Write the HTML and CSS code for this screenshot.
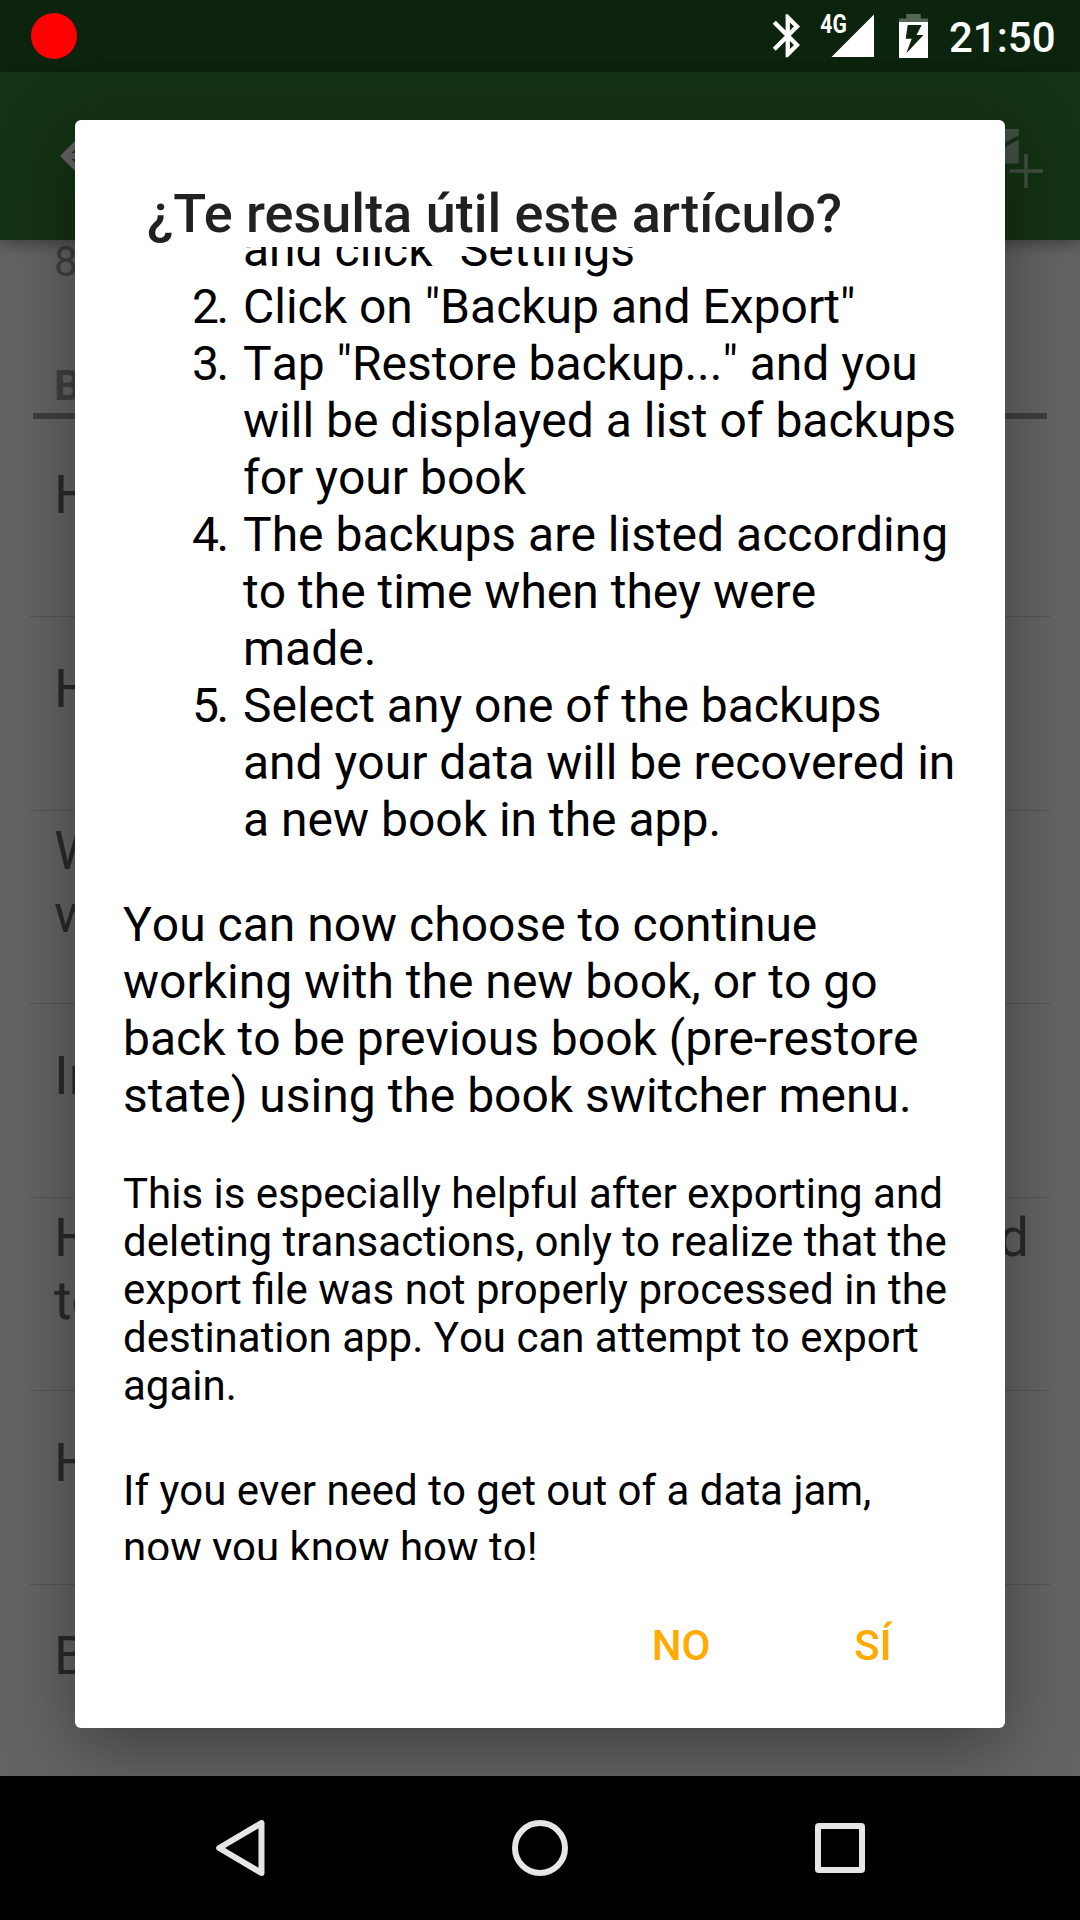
FILE: index.html
```html
<!DOCTYPE html>
<html lang="es">
<head>
<meta charset="utf-8">
<title>¿Te resulta útil este artículo?</title>
<link rel="stylesheet" href="styles.css">
</head>
<body>
<div class="screen">
  <header class="status-bar">
    <span class="record-dot"></span>
    <svg class="bluetooth" viewBox="0 0 24 24"><path d="M17.71 7.71L12 2h-1v7.59L6.41 5 5 6.41 10.59 12 5 17.59 6.41 19 11 14.41V22h1l5.71-5.71-4.3-4.29 4.3-4.29zM13 5.83l1.88 1.88L13 9.59V5.83zm1.88 10.46L13 18.17v-3.76l1.88 1.88z"/></svg>
    <svg class="signal" viewBox="0 0 55 72"><text class="network" transform="translate(.3 33.3) scale(.88 1.04)">4G</text><path d="M54 14.5V57H11.5z"/></svg>
    <svg class="battery" viewBox="0 0 29 72"><path class="battery-empty" d="M7.3 14h14.400v4.500H29V22H0v-3.500h7.300z"/><path fill-rule="evenodd" d="M0 22h29v36H0zM8.700 25L6.700 38.700h6L7.300 53.300 24.500 35h-7L22.700 25z"/></svg>
    <span class="clock">21:50</span>
  </header>
  <div class="toolbar">
    <svg class="back-arrow" viewBox="0 0 24 24"><path d="M20 11H7.830l5.590-5.590L12 4l-8 8 8 8 1.410-1.410L7.830 13H20v-2z"/></svg>
    <svg class="mail-add" viewBox="0 0 80 62"><path d="M0 2h54.700v6.500L27 23 0 8.500zM0 13l27 14.500L54.700 12.500v24H0z"/><path d="M60.200 27h3.600v15.200H79v3.600H63.800V61h-3.600V45.800H45.500v-3.600h14.700z"/></svg>
  </div>
  <main class="articles">
    <p class="count">8</p>
    <h2 class="section">B</h2>
    <ul class="rows">
      <li class="row"><span>H</span></li>
      <li class="row"><span>H</span></li>
      <li class="row"><span>W<br>w</span></li>
      <li class="row"><span>In</span></li>
      <li class="row"><span>H<br>to</span><span class="line-end">d</span></li>
      <li class="row"><span>H</span></li>
      <li class="row"><span>B</span></li>
    </ul>
  </main>
  <nav class="nav-bar">
    <svg viewBox="0 0 60 60"><path d="M9.200 30L51.500 5v50z"/></svg>
    <svg viewBox="0 0 60 60"><circle cx="30" cy="30" r="25"/></svg>
    <svg viewBox="0 0 60 60"><rect x="8" y="8" width="44" height="44" rx=".8"/></svg>
  </nav>
  <section class="dialog">
    <h1 class="title">¿Te resulta útil este artículo?</h1>
    <div class="content">
      <ol class="steps">
        <li class="step partial">and click "Settings"</li>
        <li class="step">Click on "Backup and Export"</li>
        <li class="step">Tap "Restore backup..." and you will be displayed a list of backups for your book</li>
        <li class="step">The backups are listed according to the time when they were made.</li>
        <li class="step">Select any one of the backups and your data will be recovered in a new book in the app.</li>
      </ol>
      <p class="lead">You can now choose to continue working with the new book, or to go back to be previous book (pre-restore state) using the book switcher menu.</p>
      <p class="note">This is especially helpful after exporting and deleting transactions, only to realize that the export file was not properly processed in the destination app. You can attempt to export again.</p>
      <p class="closing">If you ever need to get out of a data jam, now you know how to!</p>
    </div>
    <div class="actions">
      <button class="action">NO</button>
      <button class="action">SÍ</button>
    </div>
  </section>
</div>
</body>
</html>
```
FILE: styles.css
```css
* {
  box-sizing: border-box;
  margin: 0;
  padding: 0;
}

body {
  font-family: Roboto, sans-serif;
}

.screen {
  position: relative;
  display: flex;
  flex-direction: column;
  width: 1080px;
  height: 1920px;
  overflow: hidden;
  background: #646464;
}

.status-bar {
  display: flex;
  align-items: center;
  flex: none;
  height: 72px;
  background: #0c240e;
  color: #fff;
  fill: #fff;
}

.record-dot {
  width: 46px;
  height: 46px;
  margin-left: 31px;
  border-radius: 50%;
  background: #f00;
}

.bluetooth {
  width: 51.5px;
  height: 51.5px;
  margin-left: 685px;
}

.signal {
  width: 55px;
  height: 72px;
  margin-left: 6.5px;
}

.network {
  font: bold 24px Roboto, sans-serif;
}

.battery {
  width: 29px;
  height: 72px;
  margin-left: 24px;
}

.battery-empty {
  fill: #56675a;
}

.clock {
  margin: 3px 0 0 21px;
  font-size: 42px;
  font-weight: 500;
  line-height: 50px;
}

.toolbar {
  z-index: 1;
  display: flex;
  flex: none;
  justify-content: space-between;
  height: 168px;
  padding: 48px 36px 0 48px;
  background: #143214;
  box-shadow: 0 4px 14px rgba(0, 0, 0, .35);
}

.back-arrow {
  width: 72px;
  height: 72px;
  fill: #636363;
}

.mail-add {
  width: 80px;
  height: 62px;
  margin-top: 7px;
  fill: #424f43;
}

.articles {
  flex: 1;
  overflow: hidden;
}

.count {
  margin-top: -3px;
  padding-left: 54px;
  color: #404040;
  font-size: 42px;
  line-height: 49px;
}

.section {
  margin: 75px 33px 0;
  padding: 0 0 3px 21px;
  border-bottom: 6px solid #404040;
  color: #404040;
  font-size: 42px;
  font-weight: 700;
  line-height: 49px;
}

.rows {
  margin: 4.5px 30px 0;
  list-style: none;
}

.row {
  display: flex;
  justify-content: space-between;
  align-items: center;
  height: 193.5px;
  padding: 0 21px 50px 24px;
  border-bottom: 1px solid #555;
  color: #2a2a2a;
  font-size: 54px;
  line-height: 63px;
}

.line-end {
  padding-bottom: 63px;
}

.nav-bar {
  display: flex;
  flex: none;
  justify-content: space-between;
  align-items: center;
  height: 144px;
  padding: 0 210px;
  background: #000;
}

.nav-bar svg {
  width: 60px;
  height: 60px;
  fill: none;
  stroke: #e6e6e6;
  stroke-width: 6;
  stroke-linejoin: round;
}

.dialog {
  position: absolute;
  z-index: 2;
  top: 120px;
  left: 75px;
  display: flex;
  flex-direction: column;
  width: 930px;
  height: 1608px;
  border-radius: 6px;
  background: #fff;
  box-shadow: 0 20px 72px rgba(0, 0, 0, .38);
}

.title {
  flex: none;
  height: 127px;
  padding: 62px 72px 0;
  color: #212121;
  font-size: 54px;
  font-weight: 500;
  line-height: 64px;
}

.content {
  height: 1313px;
  padding: 0 48px;
  overflow: hidden;
  color: #000;
  font-kerning: none;
}

.steps {
  margin-top: -26px;
  padding-left: 120px;
  font-size: 48px;
  line-height: 57px;
  list-style: none;
  counter-reset: step;
}

.step {
  counter-increment: step;
}

/* numbers hang in the list's left padding */
.step::before {
  content: counter(step) ".";
  display: inline-block;
  width: 51px;
  margin-left: -51px;
  letter-spacing: -2.5px;
}

.partial::before {
  content: "";
}

.lead {
  margin-top: 48px;
  font-size: 48px;
  line-height: 57px;
}

.note {
  margin-top: 46px;
  font-size: 42px;
  line-height: 48px;
}

.closing {
  margin-top: 52px;
  font-size: 42px;
  line-height: 57px;
}

.actions {
  display: flex;
  justify-content: flex-end;
  padding: 31px 36px 0 0;
}

.action {
  width: 192px;
  height: 108px;
  border: 0;
  background: none;
  color: #ffab00;
  font: 500 42px Roboto, sans-serif;
}
```
